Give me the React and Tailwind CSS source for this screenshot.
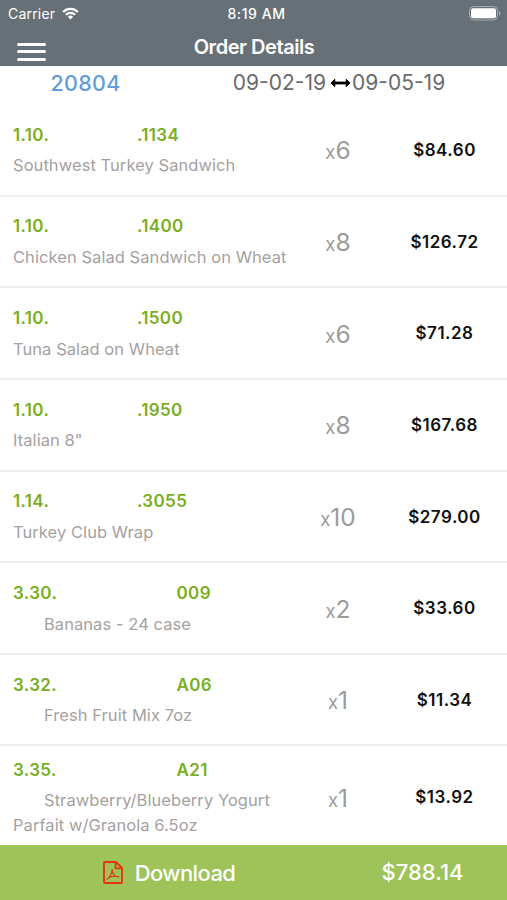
const items = [
    { id: 1, prefix: "1.10.", suffix: ".1134", name: "Southwest Turkey Sandwich", qty: 6, price: "$84.60" },
    { id: 2, prefix: "1.10.", suffix: ".1400", name: "Chicken Salad Sandwich on Wheat", qty: 8, price: "$126.72" },
    { id: 3, prefix: "1.10.", suffix: ".1500", name: "Tuna Salad on Wheat", qty: 6, price: "$71.28" },
    { id: 4, prefix: "1.10.", suffix: ".1950", name: "Italian 8\"", qty: 8, price: "$167.68" },
    { id: 5, prefix: "1.14.", suffix: ".3055", name: "Turkey Club Wrap", qty: 10, price: "$279.00" },
    { id: 6, prefix: "3.30.", suffix: "009", name: "Bananas - 24 case", qty: 2, price: "$33.60", indent: true },
    { id: 7, prefix: "3.32.", suffix: "A06", name: "Fresh Fruit Mix 7oz", qty: 1, price: "$11.34", indent: true },
    { id: 8, prefix: "3.35.", suffix: "A21", name: "Strawberry/Blueberry Yogurt Parfait w/Granola 6.5oz", qty: 1, price: "$13.92", indent: true, last: true },
];

function PdfIcon() {
    return (
        <svg className="w-5 h-[23px] text-[#e5330b]" viewBox="0 0 20 23" fill="none" stroke="currentColor" strokeWidth="1.8" strokeLinejoin="round">
            <path d="M2 1h11l6 6v14a1 1 0 0 1-1 1H2a1 1 0 0 1-1-1V2a1 1 0 0 1 1-1z" />
            <path d="M12.6 1v6.300h6.300" />
            <path d="M4 18.300c2.200-1.200 4.800-5.200 5.200-9.600M9.200 8.700c.2 3.800 2.400 6.900 6.700 7.200M5.600 16.600c2.600-1.400 6.400-1.900 10.300-.7" strokeWidth="1.200" strokeLinecap="round" />
        </svg>
    );
}

function RangeArrow() {
    return (
        <svg className="ml-1 mr-px w-[21px] h-[10px]" viewBox="0 0 21 10" fill="none" stroke="black" strokeLinejoin="round">
            <path d="M3 5h15" strokeWidth="2.800" />
            <path d="M4.800 1.300v7.400L1 5zM16.200 1.300v7.400L20 5z" fill="black" strokeWidth="1" />
        </svg>
    );
}

function StatusBar() {
    return (
        <div className="grid grid-cols-3 items-center h-[27px] pl-2 pr-[6px] text-[14px]">
            <div className="flex items-center gap-[7px]">
                <span className="tracking-[0.2px]">Carrier</span>
                <svg className="w-[17px] h-[13px]" viewBox="0 0 18 13" fill="none" stroke="currentColor" strokeWidth="2.300">
                    <path d="M1.200 4.800a11 11 0 0 1 15.600 0" />
                    <path d="M4.100 7.800a7 7 0 0 1 9.800 0" />
                    <path d="M9 12.800L6.200 9.900a4 4 0 0 1 5.600 0z" fill="currentColor" stroke="none" />
                </svg>
            </div>
            <span className="pl-1 text-center font-medium tracking-[0.55px]">8:19 AM</span>
            <svg className="justify-self-end w-[32px] h-[15px]" viewBox="0 0 32 15" fill="none">
                <rect x="0.500" y="0.500" width="28" height="13.500" rx="4" stroke="#a5abb0" />
                <rect x="2" y="2.300" width="25" height="10" rx="2" fill="white" />
                <path d="M30 5v4.500c1-.4 1.500-1.200 1.500-2.250S31 5.400 30 5z" fill="#a5abb0" />
            </svg>
        </div>
    );
}

function OrderItem({ item }) {
    return (
        <div className={item.last ? "flex shrink-0 items-center h-[101px] pt-px" : "flex shrink-0 items-center h-[91.65px] pt-px border-b-2 border-[#efefef]"}>
            <div className="w-[290px] pl-[13px]">
                <div className="flex text-[17px] leading-6 font-semibold tracking-[0.35px] text-[#79ae23]">
                    <span className={item.indent ? "w-[163.5px]" : "w-[124px]"}>{item.prefix}</span>
                    <span>{item.suffix}</span>
                </div>
                <p className={item.indent ? "mt-[6.5px] indent-[31px] text-[16.5px] leading-[24.5px] tracking-[0.06px] text-[#a5a1a1]" : "mt-[6.5px] text-[16.5px] leading-[24.5px] tracking-[0.06px] text-[#a5a1a1]"}>{item.name}</p>
            </div>
            <div className="w-[96px] pt-px text-center text-[#9b9b9b]">
                <span className="text-[18.5px]">x</span>
                <span className="text-[24.5px]">{item.qty}</span>
            </div>
            <div className="w-[117px] pt-px text-center text-[17px] font-semibold tracking-[0.5px] text-[#111111]">{item.price}</div>
        </div>
    );
}

export default function App() {
    return (
        <div className="flex flex-col w-[507px] h-[900px] overflow-hidden bg-white font-['Inter','Liberation_Sans',sans-serif]">
            <header className="shrink-0 h-[66px] bg-[#677077] text-white">
                <StatusBar />
                <div className="grid grid-cols-[60px_1fr_60px] items-center h-[39px]">
                    <div className="flex flex-col gap-[4.5px] w-[29px] ml-[16.5px] mt-[10px]">
                        <span className="h-[3px] rounded-full bg-white"></span>
                        <span className="h-[3px] rounded-full bg-white"></span>
                        <span className="h-[3px] rounded-full bg-white"></span>
                    </div>
                    <h1 className="pt-px pl-px text-center text-[20px] font-semibold tracking-[-0.45px]">Order Details</h1>
                </div>
            </header>
            <div className="flex shrink-0 items-center h-[39px] pb-[5px] text-[21px]">
                <span className="w-[171px] text-center text-[21.5px] font-medium tracking-[0.3px] text-[#639cd9]">20804</span>
                <div className="flex flex-1 items-center justify-center text-[#6a6a6a]">
                    <span>09-02-19</span>
                    <RangeArrow />
                    <span>09-05-19</span>
                </div>
            </div>
            <main className="flex flex-col flex-1 overflow-hidden">
                {items.map(item => <OrderItem key={item.id} item={item} />)}
            </main>
            <footer className="flex shrink-0 items-center h-[55px] bg-[#9dc359] text-white text-[22px] font-medium">
                <button className="flex items-center justify-center gap-3 w-[338px]">
                    <PdfIcon />
                    <span className="pt-px tracking-[-0.6px]">Download</span>
                </button>
                <span className="flex-1 text-center">$788.14</span>
            </footer>
        </div>
    );
}
